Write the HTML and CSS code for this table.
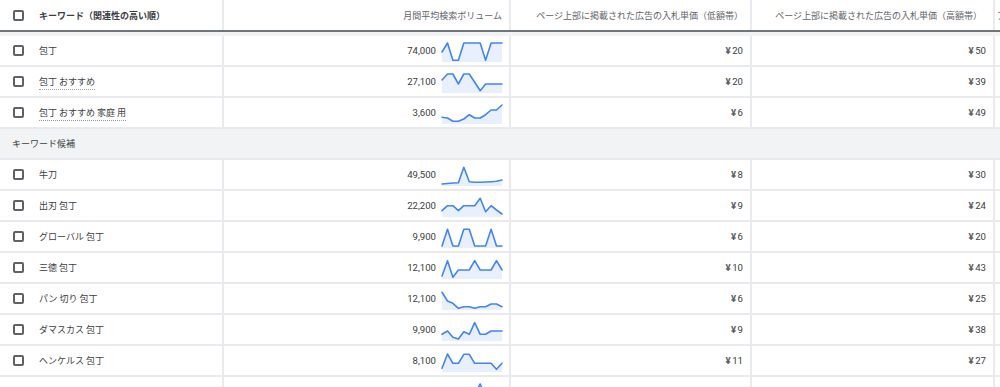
FILE: index.html
```html
<!DOCTYPE html>
<html lang="ja">
<head>
<meta charset="utf-8">
<title>キーワード</title>
<link rel="stylesheet" href="styles.css">
</head>
<body>
<div class="table">
  <div class="row head">
    <div class="cell c1"><span class="cb"></span><span class="kw-h">キーワード（関連性の高い順）</span></div>
    <div class="cell c2 right pad-h">月間平均検索ボリューム</div>
    <div class="cell c3 right pad-h">ページ上部に掲載された広告の入札単価（低額帯）</div>
    <div class="cell c4 right pad-h4">ページ上部に掲載された広告の入札単価（高額帯）</div>
    <div class="cell c5 left">アカウントのステータス</div>
  </div>
  <div class="band"></div>

  <div class="row">
    <div class="cell c1"><span class="cb"></span><span class="kw">包丁</span></div>
    <div class="cell c2 right"><span class="num">74,000</span><svg class="spark" viewBox="0 0 60 19"><polygon class="area" points="0,9 5.5,0 10.9,17.3 16.4,17.3 21.8,0 27.3,0 32.7,0 38.2,0 43.6,17.3 49.1,0 54.5,0 60,0 60,19 0,19"/><polyline class="line" points="0,9 5.5,0 10.9,17.3 16.4,17.3 21.8,0 27.3,0 32.7,0 38.2,0 43.6,17.3 49.1,0 54.5,0 60,0"/></svg></div>
    <div class="cell c3 right"><span class="yen">¥</span><span class="num">20</span></div>
    <div class="cell c4 right"><span class="yen">¥</span><span class="num">50</span></div>
    <div class="cell c5"></div>
  </div>
  <div class="row">
    <div class="cell c1"><span class="cb"></span><span class="kw dotted">包丁 おすすめ</span></div>
    <div class="cell c2 right"><span class="num">27,100</span><svg class="spark" viewBox="0 0 60 19"><polygon class="area" points="0,6 5.5,0 10.9,0 16.4,10 21.8,0 27.3,0 32.7,8.3 38.2,16.7 43.6,10 49.1,10 54.5,10 60,10 60,19 0,19"/><polyline class="line" points="0,6 5.5,0 10.9,0 16.4,10 21.8,0 27.3,0 32.7,8.3 38.2,16.7 43.6,10 49.1,10 54.5,10 60,10"/></svg></div>
    <div class="cell c3 right"><span class="yen">¥</span><span class="num">20</span></div>
    <div class="cell c4 right"><span class="yen">¥</span><span class="num">39</span></div>
    <div class="cell c5"></div>
  </div>
  <div class="row">
    <div class="cell c1"><span class="cb"></span><span class="kw dotted">包丁 おすすめ 家庭 用</span></div>
    <div class="cell c2 right"><span class="num">3,600</span><svg class="spark" viewBox="0 0 60 19"><polygon class="area" points="0,12.3 5.5,13 10.9,16.3 16.4,16.3 21.8,14 27.3,9.7 32.7,13 38.2,13 43.6,9.7 49.1,5 54.5,5 60,0 60,19 0,19"/><polyline class="line" points="0,12.3 5.5,13 10.9,16.3 16.4,16.3 21.8,14 27.3,9.7 32.7,13 38.2,13 43.6,9.7 49.1,5 54.5,5 60,0"/></svg></div>
    <div class="cell c3 right"><span class="yen">¥</span><span class="num">6</span></div>
    <div class="cell c4 right"><span class="yen">¥</span><span class="num">49</span></div>
    <div class="cell c5"></div>
  </div>

  <div class="section">キーワード候補</div>

  <div class="row">
    <div class="cell c1"><span class="cb"></span><span class="kw">牛刀</span></div>
    <div class="cell c2 right"><span class="num">49,500</span><svg class="spark" viewBox="0 0 60 19"><polygon class="area" points="0,17 5.5,16.5 10.9,16 16.4,15.7 21.8,0.3 27.3,14.7 32.7,15.3 38.2,15.3 43.6,15 49.1,14.7 54.5,14.3 60,13 60,19 0,19"/><polyline class="line" points="0,17 5.5,16.5 10.9,16 16.4,15.7 21.8,0.3 27.3,14.7 32.7,15.3 38.2,15.3 43.6,15 49.1,14.7 54.5,14.3 60,13"/></svg></div>
    <div class="cell c3 right"><span class="yen">¥</span><span class="num">8</span></div>
    <div class="cell c4 right"><span class="yen">¥</span><span class="num">30</span></div>
    <div class="cell c5"></div>
  </div>
  <div class="row">
    <div class="cell c1"><span class="cb"></span><span class="kw">出刃 包丁</span></div>
    <div class="cell c2 right"><span class="num">22,200</span><svg class="spark" viewBox="0 0 60 19"><polygon class="area" points="0,12.7 5.5,7.7 10.9,7.7 16.4,12.7 21.8,7.7 27.3,7.7 32.7,7.7 38.2,0.3 43.6,13.7 49.1,7.7 54.5,12 60,16 60,19 0,19"/><polyline class="line" points="0,12.7 5.5,7.7 10.9,7.7 16.4,12.7 21.8,7.7 27.3,7.7 32.7,7.7 38.2,0.3 43.6,13.7 49.1,7.7 54.5,12 60,16"/></svg></div>
    <div class="cell c3 right"><span class="yen">¥</span><span class="num">9</span></div>
    <div class="cell c4 right"><span class="yen">¥</span><span class="num">24</span></div>
    <div class="cell c5"></div>
  </div>
  <div class="row">
    <div class="cell c1"><span class="cb"></span><span class="kw">グローバル 包丁</span></div>
    <div class="cell c2 right"><span class="num">9,900</span><svg class="spark" viewBox="0 0 60 19"><polygon class="area" points="0,17 5.5,0.3 10.9,17 16.4,17 21.8,0.3 27.3,0.3 32.7,17 38.2,17 43.6,17 49.1,0.3 54.5,17 60,17 60,19 0,19"/><polyline class="line" points="0,17 5.5,0.3 10.9,17 16.4,17 21.8,0.3 27.3,0.3 32.7,17 38.2,17 43.6,17 49.1,0.3 54.5,17 60,17"/></svg></div>
    <div class="cell c3 right"><span class="yen">¥</span><span class="num">6</span></div>
    <div class="cell c4 right"><span class="yen">¥</span><span class="num">20</span></div>
    <div class="cell c5"></div>
  </div>
  <div class="row">
    <div class="cell c1"><span class="cb"></span><span class="kw">三徳 包丁</span></div>
    <div class="cell c2 right"><span class="num">12,100</span><svg class="spark" viewBox="0 0 60 19"><polygon class="area" points="0,16 5.5,0.7 10.9,17.3 16.4,10 21.8,10 27.3,10 32.7,0.7 38.2,10 43.6,10 49.1,10 54.5,0.7 60,10 60,19 0,19"/><polyline class="line" points="0,16 5.5,0.7 10.9,17.3 16.4,10 21.8,10 27.3,10 32.7,0.7 38.2,10 43.6,10 49.1,10 54.5,0.7 60,10"/></svg></div>
    <div class="cell c3 right"><span class="yen">¥</span><span class="num">10</span></div>
    <div class="cell c4 right"><span class="yen">¥</span><span class="num">43</span></div>
    <div class="cell c5"></div>
  </div>
  <div class="row">
    <div class="cell c1"><span class="cb"></span><span class="kw">パン 切り 包丁</span></div>
    <div class="cell c2 right"><span class="num">12,100</span><svg class="spark" viewBox="0 0 60 19"><polygon class="area" points="0,1.3 5.5,10 10.9,12.3 16.4,17.3 21.8,15.7 27.3,15.7 32.7,17.3 38.2,15.7 43.6,15.7 49.1,13 54.5,13 60,15.7 60,19 0,19"/><polyline class="line" points="0,1.3 5.5,10 10.9,12.3 16.4,17.3 21.8,15.7 27.3,15.7 32.7,17.3 38.2,15.7 43.6,15.7 49.1,13 54.5,13 60,15.7"/></svg></div>
    <div class="cell c3 right"><span class="yen">¥</span><span class="num">6</span></div>
    <div class="cell c4 right"><span class="yen">¥</span><span class="num">25</span></div>
    <div class="cell c5"></div>
  </div>
  <div class="row">
    <div class="cell c1"><span class="cb"></span><span class="kw">ダマスカス 包丁</span></div>
    <div class="cell c2 right"><span class="num">9,900</span><svg class="spark" viewBox="0 0 60 19"><polygon class="area" points="0,12.3 5.5,9 10.9,15.3 16.4,17 21.8,9.7 27.3,12.3 32.7,0.7 38.2,12.3 43.6,12.3 49.1,9 54.5,9 60,9 60,19 0,19"/><polyline class="line" points="0,12.3 5.5,9 10.9,15.3 16.4,17 21.8,9.7 27.3,12.3 32.7,0.7 38.2,12.3 43.6,12.3 49.1,9 54.5,9 60,9"/></svg></div>
    <div class="cell c3 right"><span class="yen">¥</span><span class="num">9</span></div>
    <div class="cell c4 right"><span class="yen">¥</span><span class="num">38</span></div>
    <div class="cell c5"></div>
  </div>
  <div class="row">
    <div class="cell c1"><span class="cb"></span><span class="kw">ヘンケルス 包丁</span></div>
    <div class="cell c2 right"><span class="num">8,100</span><svg class="spark" viewBox="0 0 60 19"><polygon class="area" points="0,15.3 5.5,1 10.9,10.3 16.4,10.3 21.8,1.3 27.3,1.3 32.7,10.3 38.2,10.3 43.6,10.3 49.1,10.3 54.5,16.3 60,10.3 60,19 0,19"/><polyline class="line" points="0,15.3 5.5,1 10.9,10.3 16.4,10.3 21.8,1.3 27.3,1.3 32.7,10.3 38.2,10.3 43.6,10.3 49.1,10.3 54.5,16.3 60,10.3"/></svg></div>
    <div class="cell c3 right"><span class="yen">¥</span><span class="num">11</span></div>
    <div class="cell c4 right"><span class="yen">¥</span><span class="num">27</span></div>
    <div class="cell c5"></div>
  </div>
  <div class="row">
    <div class="cell c1"></div>
    <div class="cell c2 right"><svg class="spark" viewBox="0 0 60 19"><polygon class="area" points="0,12 5.5,12 10.9,10 16.4,12 21.8,12 27.3,12 32.7,10 38.2,0 43.6,12 49.1,12 54.5,10 60,12 60,19 0,19"/><polyline class="line" points="0,12 5.5,12 10.9,10 16.4,12 21.8,12 27.3,12 32.7,10 38.2,0 43.6,12 49.1,12 54.5,10 60,12"/></svg></div>
    <div class="cell c3 right"></div>
    <div class="cell c4 right"></div>
    <div class="cell c5"></div>
  </div>
</div>
</body>
</html>
```

FILE: styles.css
```css
html, body {
  margin: 0;
  padding: 0;
  background: #ffffff;
  overflow: hidden;
}

body {
  font-family: "Noto Sans CJK JP", sans-serif;
  font-size: 9px;
  color: #3c4043;
}

.table {
  width: 1193px;
}

.row {
  display: grid;
  grid-template-columns: 222px 287px 241px 243px 200px;
  height: 31px;
  box-sizing: border-box;
  border-bottom: 2px solid #e8eaed;
}

.row.head {
  height: 32px;
  border-bottom: 2px solid #70757a;
  color: #5f6368;
}

.band {
  height: 4px;
  background: #f1f3f4;
}

.cell {
  display: flex;
  align-items: center;
  min-width: 0;
  white-space: nowrap;
  overflow: hidden;
  box-sizing: border-box;
}

.c2, .c3, .c4, .c5 {
  border-left: 2px solid #e8eaed;
}

.right {
  justify-content: flex-end;
  padding-right: 7px;
}

.pad-h {
  padding-right: 7px;
}

.pad-h4 {
  padding-right: 11px;
}

.left {
  padding-left: 2px;
}

.cb {
  flex: none;
  width: 11px;
  height: 11px;
  box-sizing: border-box;
  border: 2px solid #5f6368;
  border-radius: 2px;
  margin-left: 13px;
  margin-right: 15px;
}

.kw-h {
  font-weight: bold;
  color: #3c4043;
}

.kw {
  color: #3c4043;
}

.kw.dotted {
  border-bottom: 1px dotted #9aa0a6;
  padding-bottom: 1px;
  margin-top: 2px;
}

.num {
  font-family: Roboto, "Noto Sans CJK JP", sans-serif;
  font-size: 9.6px;
  color: #3c4043;
}

.yen {
  font-family: Roboto, sans-serif;
  font-size: 9.6px;
  font-weight: bold;
  color: #5f6368;
  margin-right: 1.5px;
}

.spark {
  flex: none;
  width: 60px;
  height: 19px;
  margin-left: 6px;
  margin-top: 3px;
  overflow: visible;
}

.spark .area {
  fill: #e8f0fe;
  stroke: none;
}

.spark .line {
  fill: none;
  stroke: #4285f4;
  stroke-width: 1.6;
  stroke-linejoin: round;
  stroke-linecap: round;
}

.section {
  height: 31px;
  box-sizing: border-box;
  background: #f1f3f4;
  border-bottom: 2px solid #e8eaed;
  display: flex;
  align-items: center;
  padding-left: 12px;
  color: #3c4043;
}
```
